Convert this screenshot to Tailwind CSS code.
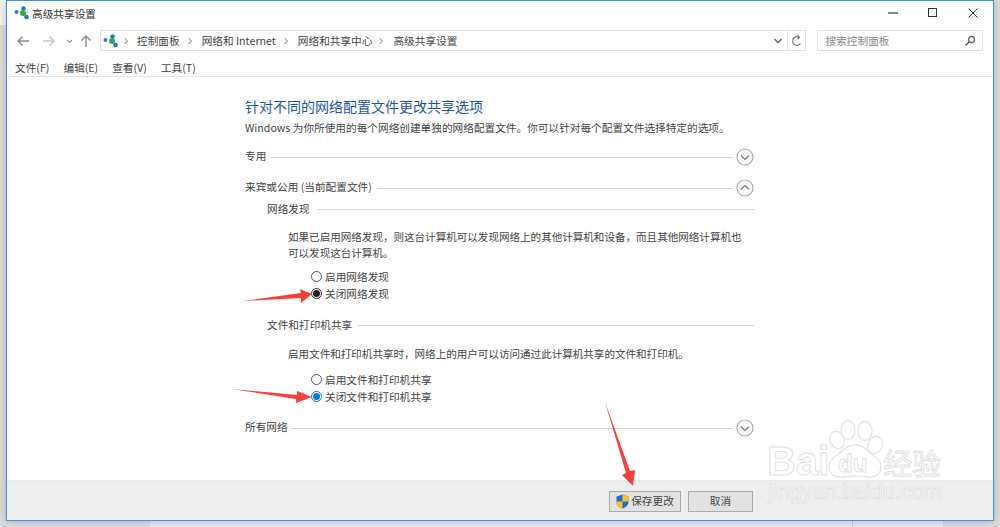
<!DOCTYPE html>
<html lang="zh-CN">
<head>
<meta charset="utf-8">
<script src="https://cdn.jsdelivr.net/npm/@tailwindcss/browser@4"></script>
</head>
<body class="m-0">
<div class="relative w-[1000px] h-[527px] overflow-hidden bg-[#dadada] font-['Noto_Sans_CJK_SC','Noto_Sans',sans-serif] text-[10.67px] leading-[16px] text-[#444]">
  <div class="absolute left-[150px] w-[793px] bottom-0 h-[7px] bg-[#e8e8e8]"></div>
  <div class="absolute left-[852px] w-px bottom-0 h-[7px] bg-[#cfcfcf]"></div>
  <div class="absolute left-0 top-0 w-[6px] h-[25px] bg-[#f2f2f2]"></div>
  <div class="absolute left-[6px] top-0 w-[988px] h-[521px] flex flex-col border-[1.5px] border-[#3a96e4] bg-white shadow-[0_0_8px_rgba(0,0,0,0.2)]">

    <!-- title bar -->
    <div class="h-[27px] shrink-0 flex items-center pl-[7px]">
      <svg class="w-[15px] h-[14px] -mt-[3px]" viewBox="0 0 15 14"><circle cx="2.500" cy="6" r="2" fill="#2a80c8"/><circle cx="9.500" cy="2.500" r="2.200" fill="#1f78c4"/><circle cx="9" cy="7" r="3" fill="#3ca648"/><circle cx="12.500" cy="11" r="2.300" fill="#1f78c4"/></svg>
      <span class="ml-[3px] -mt-[1px] text-[#333]">高级共享设置</span>
      <div class="ml-auto -mt-[4px] flex items-center">
        <svg class="w-[40px] h-[14px]" viewBox="0 0 40 14"><path d="M15 7h10" stroke="#333" stroke-width="1.200"/></svg>
        <svg class="w-[40px] h-[14px]" viewBox="0 0 40 14"><rect x="15.500" y="2.500" width="8" height="8" fill="none" stroke="#333" stroke-width="1"/></svg>
        <svg class="w-[40px] h-[14px]" viewBox="0 0 40 14"><path d="M15.500 2.500l9 9M24.500 2.500l-9 9" stroke="#333" stroke-width="1"/></svg>
      </div>
    </div>

    <!-- navigation bar -->
    <div class="h-[25px] shrink-0 flex items-center">
      <div class="w-[93px] shrink-0 flex items-center">
        <svg class="ml-[9px] w-[14px] h-[14px]" viewBox="0 0 14 14"><path d="M13 7H2M6.500 2.500L2 7l4.500 4.500" fill="none" stroke="#8a8a8a" stroke-width="1.400"/></svg>
        <svg class="ml-[12px] w-[14px] h-[14px]" viewBox="0 0 14 14"><path d="M1 7h11M7.500 2.500L12 7l-4.500 4.500" fill="none" stroke="#c8c8c8" stroke-width="1.400"/></svg>
        <svg class="ml-[9px] w-[9px] h-[14px]" viewBox="0 0 9 14"><path d="M2 6l2.500 2.500L7 6" fill="none" stroke="#999" stroke-width="1.200"/></svg>
        <svg class="ml-[5px] w-[14px] h-[14px]" viewBox="0 0 14 14"><path d="M7 13V2M2.500 6.500L7 2l4.500 4.500" fill="none" stroke="#8a8a8a" stroke-width="1.400"/></svg>
      </div>
      <div class="w-[706px] h-[21px] shrink-0 flex items-center border border-[#e3e3e3]">
        <svg class="ml-[2px] w-[15px] h-[14px]" viewBox="0 0 15 14"><circle cx="2.500" cy="6" r="2" fill="#2a80c8"/><circle cx="9.500" cy="2.500" r="2.200" fill="#1f78c4"/><circle cx="9" cy="7" r="3" fill="#3ca648"/><circle cx="12.500" cy="11" r="2.300" fill="#1f78c4"/></svg>
        <svg class="ml-[5px] w-[6px] h-[10px]" viewBox="0 0 6 10"><path d="M1.500 2l3 3-3 3" fill="none" stroke="#777"/></svg>
        <span class="ml-[8px] whitespace-nowrap">控制面板</span>
        <svg class="ml-[7px] w-[6px] h-[10px]" viewBox="0 0 6 10"><path d="M1.500 2l3 3-3 3" fill="none" stroke="#777"/></svg>
        <span class="ml-[9px] whitespace-nowrap">网络和 Internet</span>
        <svg class="ml-[7px] w-[6px] h-[10px]" viewBox="0 0 6 10"><path d="M1.500 2l3 3-3 3" fill="none" stroke="#777"/></svg>
        <span class="ml-[9px] whitespace-nowrap">网络和共享中心</span>
        <svg class="ml-[6px] w-[6px] h-[10px]" viewBox="0 0 6 10"><path d="M1.500 2l3 3-3 3" fill="none" stroke="#777"/></svg>
        <span class="ml-[9px] whitespace-nowrap">高级共享设置</span>
        <svg class="ml-auto mr-[4px] w-[10px] h-[10px]" viewBox="0 0 10 10"><path d="M1.500 3l3.500 3.500L8.500 3" fill="none" stroke="#666" stroke-width="1.300"/></svg>
        <div class="w-[18px] h-full flex items-center justify-center border-l border-[#e3e3e3]">
          <svg class="w-[12px] h-[12px]" viewBox="0 0 12 12"><path d="M9.500 8.500A4.300 4.300 0 1 1 8 2.300M6.500 0.500L8.500 2.300 6.500 4.200" fill="none" stroke="#777" stroke-width="1.200"/></svg>
        </div>
      </div>
      <div class="ml-[10.500px] w-[166px] h-[21px] shrink-0 flex items-center justify-between border border-[#e3e3e3] pl-[8px] pr-[6px] text-[#8a8a8a]">
        <span>搜索控制面板</span>
        <svg class="w-[12px] h-[12px]" viewBox="0 0 12 12"><circle cx="7.500" cy="4.500" r="3" fill="none" stroke="#666" stroke-width="1.300"/><path d="M5.300 6.700L1.500 10.500" stroke="#666" stroke-width="1.600"/></svg>
      </div>
    </div>

    <!-- menu bar -->
    <div class="h-[24px] shrink-0 flex items-center gap-[14px] pl-[8px] pt-[7px] border-b border-[#e6e6e6]">
      <span>文件(F)</span><span>编辑(E)</span><span>查看(V)</span><span>工具(T)</span>
    </div>

    <!-- content -->
    <main class="flex-1 pl-[238px] pt-[19px]">
      <h1 class="text-[14px] leading-[20px] font-normal text-[#1d56a8]">针对不同的网络配置文件更改共享选项</h1>
      <p class="mt-[4px] whitespace-nowrap">Windows 为你所使用的每个网络创建单独的网络配置文件。你可以针对每个配置文件选择特定的选项。</p>

      <div class="mt-[10px] h-[22px] flex items-center w-[509px]">
        <span class="-mt-[2px]">专用</span>
        <div class="flex-1 h-px bg-[#d6d6d6] ml-[5px] mr-[3px]"></div>
        <svg class="w-[18px] h-[18px]" viewBox="0 0 18 18"><circle cx="9" cy="9" r="8" fill="#fff" stroke="#a8a8a8" stroke-width="1.200"/><path d="M5 7.500l4 4 4-4" fill="none" stroke="#808080" stroke-width="1.300"/></svg>
      </div>
      <div class="mt-[9px] h-[22px] flex items-center w-[509px]">
        <span class="-mt-[2px]">来宾或公用 (当前配置文件)</span>
        <div class="flex-1 h-px bg-[#d6d6d6] ml-[5px] mr-[3px]"></div>
        <svg class="w-[18px] h-[18px]" viewBox="0 0 18 18"><circle cx="9" cy="9" r="8" fill="#fff" stroke="#a8a8a8" stroke-width="1.200"/><path d="M5 10.500l4-4 4 4" fill="none" stroke="#808080" stroke-width="1.300"/></svg>
      </div>

      <div class="pl-[22px] w-[509px]">
        <div class="mt-[1px] h-[18px] flex items-center"><span>网络发现</span><div class="flex-1 h-px bg-[#d6d6d6] ml-[8px]"></div></div>
        <p class="mt-[11px] pl-[21px] pr-[6px] text-[10.550px]">如果已启用网络发现，则这台计算机可以发现网络上的其他计算机和设备，而且其他网络计算机也可以发现这台计算机。</p>
        <div class="mt-[7px] pl-[44px] flex flex-col">
          <label class="h-[17px] flex items-center gap-[3px]"><span class="w-[11px] h-[11px] rounded-full border border-[#555] bg-white"></span>启用网络发现</label>
          <label class="h-[17px] flex items-center gap-[3px]"><span class="w-[11px] h-[11px] rounded-full border border-[#333] bg-white flex items-center justify-center"><span class="w-[7px] h-[7px] rounded-full bg-[#222]"></span></span>关闭网络发现</label>
        </div>
        <div class="mt-[14px] h-[18px] flex items-center"><span>文件和打印机共享</span><div class="flex-1 h-px bg-[#d6d6d6] ml-[6px]"></div></div>
        <p class="mt-[12px] pl-[21px] text-[10.550px]">启用文件和打印机共享时，网络上的用户可以访问通过此计算机共享的文件和打印机。</p>
        <div class="mt-[9px] pl-[44px] flex flex-col">
          <label class="h-[17px] flex items-center gap-[3px]"><span class="w-[11px] h-[11px] rounded-full border border-[#555] bg-white"></span>启用文件和打印机共享</label>
          <label class="h-[17px] flex items-center gap-[3px]"><span class="w-[11px] h-[11px] rounded-full border border-[#0a78d7] bg-white flex items-center justify-center"><span class="w-[7px] h-[7px] rounded-full bg-[#0a78d7]"></span></span>关闭文件和打印机共享</label>
        </div>
      </div>

      <div class="mt-[12px] h-[22px] flex items-center w-[509px]">
        <span class="-mt-[3px]">所有网络</span>
        <div class="flex-1 h-px bg-[#d6d6d6] ml-[3px] mr-[3px]"></div>
        <svg class="w-[18px] h-[18px]" viewBox="0 0 18 18"><circle cx="9" cy="9" r="8" fill="#fff" stroke="#a8a8a8" stroke-width="1.200"/><path d="M5 7.500l4 4 4-4" fill="none" stroke="#808080" stroke-width="1.300"/></svg>
      </div>
    </main>

    <!-- footer -->
    <footer class="h-[40px] shrink-0 flex items-center justify-end gap-[7px] pr-[240px] bg-[#eeeeee] border-t-2 border-[#ebebeb]">
      <button class="w-[72px] h-[21px] flex items-center justify-center gap-[2px] bg-[#e2e2e2] border border-[#ababab]">
        <svg class="w-[13px] h-[15px]" viewBox="0 0 13 15"><path d="M6.500 0.500L12.500 2.500V8c0 3-2.500 5.300-6 6.500C3 13.300 0.500 11 0.500 8V2.500z" fill="#1f6fc4"/><path d="M6.500 0.500L12.500 2.500V7.500H6.500zM6.500 7.500H0.500V8c0 3 2.500 5.300 6 6.500z" fill="#f4c430"/></svg>
        <span>保存更改</span>
      </button>
      <button class="w-[65px] h-[21px] bg-[#e2e2e2] border border-[#ababab]">取消</button>
    </footer>
  </div>

  <!-- annotation arrows -->
  <svg class="absolute left-0 top-0 pointer-events-none" width="1000" height="527" viewBox="0 0 1000 527">
    <path d="M243 301L301 293 300 289 312 294 301 303 301 298z" fill="#f5413c"/>
    <path d="M232 389L297 395 297 391 312 397 296 403 296 399z" fill="#f5413c"/>
    <path d="M605 402L630 471 635 470 633 486 622 475 626 473z" fill="#f5413c"/>
  </svg>

  <!-- watermark -->
  <div class="absolute left-[760px] top-[420px] w-[200px] h-[90px] pointer-events-none">
    <svg class="absolute left-0 top-0" width="200" height="70" viewBox="0 0 200 70">
      <g fill="#fff" stroke="#e4e4e4" stroke-width="1.300">
        <ellipse cx="77" cy="20" rx="7" ry="9" transform="rotate(-25 77 20)"/>
        <ellipse cx="88" cy="10" rx="7" ry="9.500"/>
        <ellipse cx="105" cy="11" rx="7" ry="9.500"/>
        <ellipse cx="115" cy="25" rx="7" ry="9" transform="rotate(25 115 25)"/>
        <path d="M95 25c-9 0-12 6-18 10-6 4-8 8-8 12 0 7 6 11 13 10 8-1 18-1 26 0 7 1 13-3 13-10 0-5-3-9-8-12-6-4-9-10-18-10z"/>
      </g>
    </svg>
    <span class="absolute left-[7px] top-[18px] font-['Liberation_Sans',sans-serif] font-bold text-[40px] leading-[46px] text-white [-webkit-text-stroke:1px_#e2e2e2]">Bai</span>
    <span class="absolute left-[78px] top-[30px] font-['Liberation_Sans',sans-serif] font-bold text-[24px] leading-[28px] text-white [-webkit-text-stroke:1px_#e2e2e2]">du</span>
    <span class="absolute left-[123px] top-[26px] text-[29px] leading-[32px] whitespace-nowrap text-white [-webkit-text-stroke:1px_#e2e2e2]">经验</span>
    <span class="absolute left-[8px] top-[60px] font-['Liberation_Sans',sans-serif] text-[21.500px] leading-[24px] whitespace-nowrap text-[#f6f6f6] [-webkit-text-stroke:0.700px_#dedede]">jingyan.baidu.com</span>
  </div>
</div>
</body>
</html>
